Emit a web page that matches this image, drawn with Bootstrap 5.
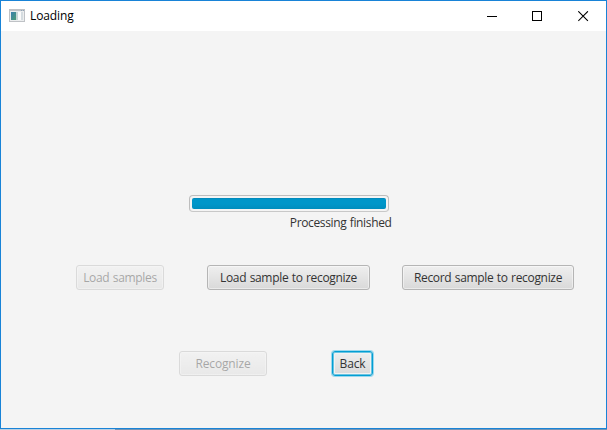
<!DOCTYPE html>
<html lang="en">
<head>
<meta charset="utf-8">
<meta name="viewport" content="width=device-width, initial-scale=1">
<title>Loading</title>
<link href="https://cdn.jsdelivr.net/npm/bootstrap@5.3.0/dist/css/bootstrap.min.css" rel="stylesheet">
<style>
body { font-family: "Open Sans", "Noto Sans", sans-serif; font-size: 12px; line-height: 16px; color: #333; background: linear-gradient(90deg, #b9cfe2 0 115px, #7294b5 115px 100%); }
.app-window { width: 607px; height: 429px; background: #f4f4f4; border: 1px solid #1883d7; }
.title-strip { height: 30px; background: #fff; color: #000; padding-left: 8px; }
.app-icon { margin: 0 5px 1px 0; }
.caption-text { letter-spacing: -.1px; }
.win-btn { width: 45.5px; height: 29px; padding: 0; border: 0; background: none; }
.progress-area { width: 202.5px; margin: 164px 0 0 188px; }
.fx-progress { width: 200px; height: 17px; padding: 2px; background: #f4f4f4; border: 1px solid #bdbdbd; border-bottom-color: #c8c8c8; border-radius: 4px; }
.fx-progress .progress-bar { background: linear-gradient(#0086b8, #0096c9 15%, #0096c9 55%, #008dbd); border-radius: 2px; }
.status-text { margin-top: 3px; margin-bottom: -1px; letter-spacing: -.36px; word-spacing: .6px; }
.fx-btn { --bs-btn-color: #333; --bs-btn-disabled-color: #333; --bs-btn-disabled-opacity: .4; height: 25px; padding: 0; font-size: 12px; line-height: 23px; white-space: nowrap; letter-spacing: -.32px; word-spacing: .6px; border: 1px solid #b5b5b5; border-radius: 3px; background: linear-gradient(#efefef, #d9d9d9); box-shadow: inset 0 0 0 1px rgba(255,255,255,.45); }
.fx-btn:disabled { border-color: #b5b5b5; }
.fx-btn.is-default { border-color: #039ed3; box-shadow: 0 0 0 1px #9bd8ed, inset 0 0 0 1px #69c4e2, inset 0 0 0 2px #f2f2f2; }
.fx-btn.is-single { letter-spacing: -.15px; }
.first-row { margin: 35px 0 0 75px; }
.second-row { margin: 61px 0 0 178px; }
.w-samples { width: 88px; }
.w-load { width: 163px; margin-left: 43px; }
.w-record { width: 172px; margin-left: 32px; }
.w-back { width: 41px; margin-left: 65px; }
</style>
</head>
<body class="overflow-hidden">
<main class="app-window">
  <header class="title-strip d-flex align-items-center">
    <svg class="app-icon" width="16" height="14" viewBox="0 0 16 14" shape-rendering="crispEdges" aria-hidden="true">
      <defs><linearGradient id="pane" x2="1" y2="1"><stop stop-color="#397fae"/><stop offset="1" stop-color="#4d9c75"/></linearGradient></defs>
      <path fill="#bfc2c6" d="M0 0h16v13H0z"/>
      <path fill="#eceeef" d="M1 2h14v10H1z"/>
      <path fill="#8fa4b8" d="M12 1h1v1h-1zM14 1h1v1h-1z"/>
      <path fill="url(#pane)" d="M2 3h5v8H2z"/>
      <path fill="#c5d5d5" d="M7 3h2v8H7z"/>
      <path fill="#fafafa" d="M9 3h3v8H9z"/>
      <path fill="#d5dce0" d="M12 3h2v8h-2z"/>
    </svg>
    <span class="caption-text">Loading</span>
    <div class="d-flex ms-auto">
      <button class="win-btn d-flex align-items-center justify-content-center" aria-label="Minimize"><svg width="11" height="11" shape-rendering="crispEdges"><path fill="#000" d="M0 5h10v1H0z"/></svg></button>
      <button class="win-btn d-flex align-items-center justify-content-center" aria-label="Maximize"><svg width="11" height="11" shape-rendering="crispEdges"><path fill="none" stroke="#000" d="M.5.5h9v9h-9z"/></svg></button>
      <button class="win-btn d-flex align-items-center justify-content-center" aria-label="Close"><svg width="11" height="11"><path fill="none" stroke="#000" stroke-width="1.1" d="M.3.3l9.6 9.6M9.9.3L.3 9.9"/></svg></button>
    </div>
  </header>
  <section class="progress-area">
    <div class="progress fx-progress" role="progressbar" aria-label="Processing" aria-valuenow="100" aria-valuemin="0" aria-valuemax="100">
      <div class="progress-bar w-100"></div>
    </div>
    <div class="status-text text-end text-nowrap">Processing finished</div>
  </section>
  <div class="first-row d-flex">
    <button class="btn fx-btn w-samples" disabled>Load samples</button>
    <button class="btn fx-btn w-load">Load sample to recognize</button>
    <button class="btn fx-btn w-record">Record sample to recognize</button>
  </div>
  <div class="second-row d-flex">
    <button class="btn fx-btn is-single w-samples" disabled>Recognize</button>
    <button class="btn fx-btn is-single is-default w-back">Back</button>
  </div>
</main>
<script src="https://cdn.jsdelivr.net/npm/bootstrap@5.3.0/dist/js/bootstrap.bundle.min.js"></script>
</body>
</html>
